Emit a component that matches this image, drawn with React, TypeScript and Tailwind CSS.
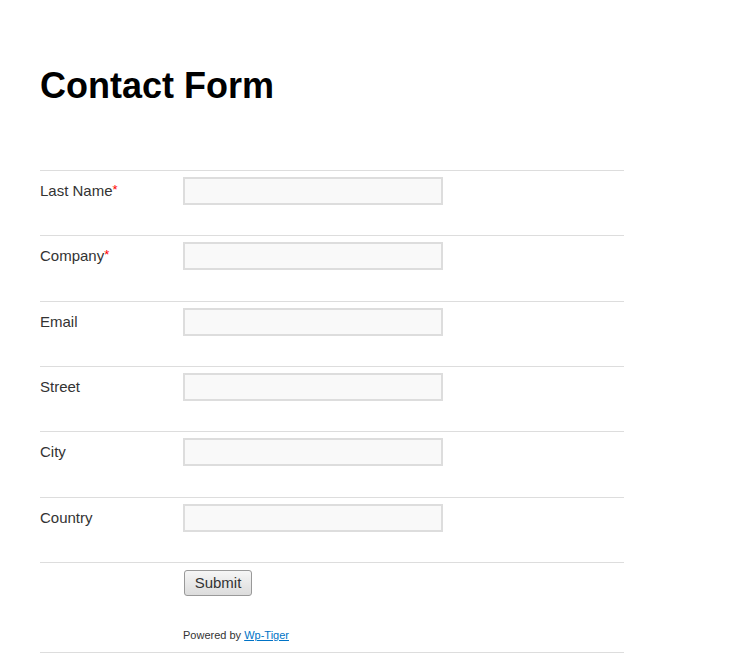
export default function App() {
  const fields = [
    { label: "Last Name", required: true },
    { label: "Company", required: true },
    { label: "Email", required: false },
    { label: "Street", required: false },
    { label: "City", required: false },
    { label: "Country", required: false },
  ];

  return (
    <div className="min-h-[659px] bg-white pl-10 pt-[62px] font-['Liberation_Sans',Arial,sans-serif] text-[#333]">
      <h1 className="text-[36px] font-bold leading-[48px] text-black">Contact Form</h1>

      <form className="mt-[60px] w-[584px]" onSubmit={(e) => e.preventDefault()}>
        {fields.map((f) => (
          <div key={f.label} className="flex h-[65.33px] border-t border-[#ddd] pt-[6px]">
            <label className="w-[143px] pt-[4px] text-[15px] leading-[20px]">
              {f.label}
              {f.required && <span className="relative -top-[2px] text-[13px] text-[#f00]">*</span>}
            </label>
            <input
              type="text"
              className="h-[28px] w-[260px] border-2 border-[#ddd] bg-[#f9f9f9] outline-none"
            />
          </div>
        ))}
        <div className="h-[90px] border-t border-[#ddd] pl-[143px] pt-[7px]">
          <button
            type="submit"
            className="ml-px h-[26px] w-[68px] rounded-[3px] border border-[#999] bg-gradient-to-b from-[#f6f6f6] to-[#dcdcdc] text-[15px] leading-none text-[#333]"
          >
            Submit
          </button>
          <p className="mt-[32px] text-[11px] leading-[14px] text-[#333]">
            Powered by <a href="#" className="text-[#0073c6] underline">Wp-Tiger</a>
          </p>
        </div>
        <div className="border-t border-[#ddd]" />
      </form>
    </div>
  );
}
